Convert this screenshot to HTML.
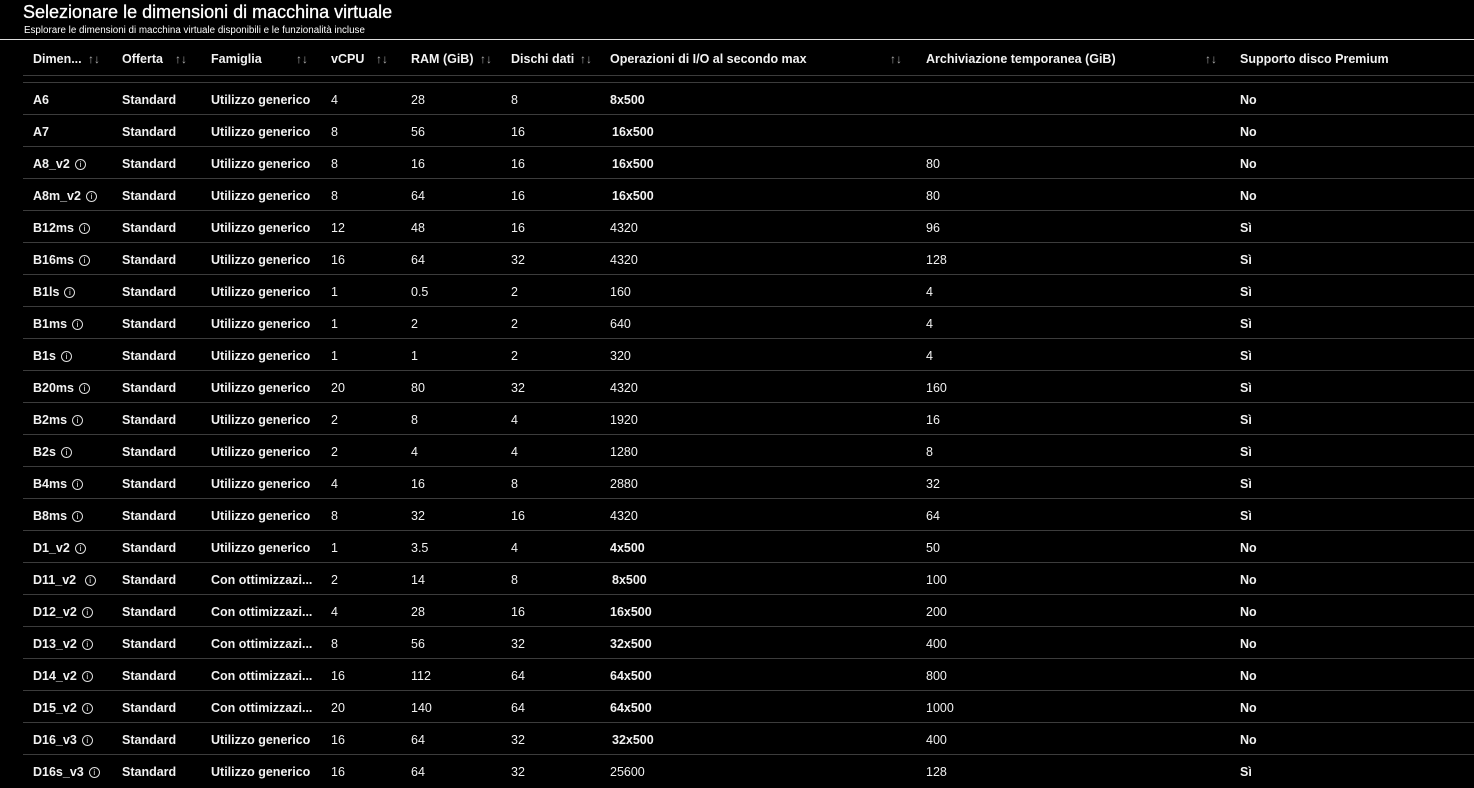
<!DOCTYPE html>
<html><head><meta charset="utf-8"><style>
*{margin:0;padding:0;box-sizing:border-box}
body{width:1474px;height:784px;background:#000;color:#f2f2f2;font-family:"Liberation Sans",sans-serif;overflow:hidden;position:relative}
.t{position:absolute;left:23px;top:2px;font-size:18px;color:#fff;white-space:nowrap;-webkit-text-stroke:0.3px #fff}
.s{position:absolute;left:24px;top:25px;font-size:9.8px;color:#fff;white-space:nowrap}
.hl{position:absolute;left:0;top:39px;width:1474px;height:1px;background:#ddd}
.r{position:absolute;left:0;width:1474px;height:32px;font-size:12.5px}
.r span{position:absolute;top:50%;transform:translateY(-50%);white-space:nowrap}
.ln{position:absolute;left:23px;width:1451px;height:1px;background:#3c3c3c}
.h span{font-weight:bold;font-size:12.5px}
.ar{color:#aaa;font-weight:normal!important;font-size:12px!important}
.i{display:inline-block;width:11px;height:11px;border:1px solid #ddd;border-radius:50%;font-size:8px;line-height:9px;text-align:center;vertical-align:1px;margin-left:5px;font-weight:normal;font-style:normal}
.b{font-weight:bold}
</style></head><body>
<div class="t">Selezionare le dimensioni di macchina virtuale</div>
<div class="s">Esplorare le dimensioni di macchina virtuale disponibili e le funzionalità incluse</div>
<div class="hl"></div>
<div class="r h" style="top:43px">
<span style="left:33px">Dimen...</span><span class="ar" style="left:88px">↑↓</span>
<span style="left:122px">Offerta</span><span class="ar" style="left:175px">↑↓</span>
<span style="left:211px">Famiglia</span><span class="ar" style="left:296px">↑↓</span>
<span style="left:331px">vCPU</span><span class="ar" style="left:376px">↑↓</span>
<span style="left:411px">RAM (GiB)</span><span class="ar" style="left:480px">↑↓</span>
<span style="left:511px">Dischi dati</span><span class="ar" style="left:580px">↑↓</span>
<span style="left:610px">Operazioni di I/O al secondo max</span><span class="ar" style="left:890px">↑↓</span>
<span style="left:926px">Archiviazione temporanea (GiB)</span><span class="ar" style="left:1205px">↑↓</span>
<span style="left:1240px">Supporto disco Premium</span>
</div>
<div class="ln" style="top:75px"></div>
<div class="ln" style="top:82px"></div>

<div class="r" style="top:84px"><span class="b" style="left:33px">A6</span><span class="b" style="left:122px">Standard</span><span class="b" style="left:211px">Utilizzo generico</span><span style="left:331px">4</span><span style="left:411px">28</span><span style="left:511px">8</span><span class="b" style="left:610px">8x500</span><span style="left:926px"></span><span class="b" style="left:1240px">No</span></div>
<div class="ln" style="top:114px"></div>
<div class="r" style="top:116px"><span class="b" style="left:33px">A7</span><span class="b" style="left:122px">Standard</span><span class="b" style="left:211px">Utilizzo generico</span><span style="left:331px">8</span><span style="left:411px">56</span><span style="left:511px">16</span><span class="b" style="left:612px">16x500</span><span style="left:926px"></span><span class="b" style="left:1240px">No</span></div>
<div class="ln" style="top:146px"></div>
<div class="r" style="top:148px"><span class="b" style="left:33px">A8_v2<i class="i">i</i></span><span class="b" style="left:122px">Standard</span><span class="b" style="left:211px">Utilizzo generico</span><span style="left:331px">8</span><span style="left:411px">16</span><span style="left:511px">16</span><span class="b" style="left:612px">16x500</span><span style="left:926px">80</span><span class="b" style="left:1240px">No</span></div>
<div class="ln" style="top:178px"></div>
<div class="r" style="top:180px"><span class="b" style="left:33px">A8m_v2<i class="i">i</i></span><span class="b" style="left:122px">Standard</span><span class="b" style="left:211px">Utilizzo generico</span><span style="left:331px">8</span><span style="left:411px">64</span><span style="left:511px">16</span><span class="b" style="left:612px">16x500</span><span style="left:926px">80</span><span class="b" style="left:1240px">No</span></div>
<div class="ln" style="top:210px"></div>
<div class="r" style="top:212px"><span class="b" style="left:33px">B12ms<i class="i">i</i></span><span class="b" style="left:122px">Standard</span><span class="b" style="left:211px">Utilizzo generico</span><span style="left:331px">12</span><span style="left:411px">48</span><span style="left:511px">16</span><span style="left:610px">4320</span><span style="left:926px">96</span><span class="b" style="left:1240px">Sì</span></div>
<div class="ln" style="top:242px"></div>
<div class="r" style="top:244px"><span class="b" style="left:33px">B16ms<i class="i">i</i></span><span class="b" style="left:122px">Standard</span><span class="b" style="left:211px">Utilizzo generico</span><span style="left:331px">16</span><span style="left:411px">64</span><span style="left:511px">32</span><span style="left:610px">4320</span><span style="left:926px">128</span><span class="b" style="left:1240px">Sì</span></div>
<div class="ln" style="top:274px"></div>
<div class="r" style="top:276px"><span class="b" style="left:33px">B1ls<i class="i">i</i></span><span class="b" style="left:122px">Standard</span><span class="b" style="left:211px">Utilizzo generico</span><span style="left:331px">1</span><span style="left:411px">0.5</span><span style="left:511px">2</span><span style="left:610px">160</span><span style="left:926px">4</span><span class="b" style="left:1240px">Sì</span></div>
<div class="ln" style="top:306px"></div>
<div class="r" style="top:308px"><span class="b" style="left:33px">B1ms<i class="i">i</i></span><span class="b" style="left:122px">Standard</span><span class="b" style="left:211px">Utilizzo generico</span><span style="left:331px">1</span><span style="left:411px">2</span><span style="left:511px">2</span><span style="left:610px">640</span><span style="left:926px">4</span><span class="b" style="left:1240px">Sì</span></div>
<div class="ln" style="top:338px"></div>
<div class="r" style="top:340px"><span class="b" style="left:33px">B1s<i class="i">i</i></span><span class="b" style="left:122px">Standard</span><span class="b" style="left:211px">Utilizzo generico</span><span style="left:331px">1</span><span style="left:411px">1</span><span style="left:511px">2</span><span style="left:610px">320</span><span style="left:926px">4</span><span class="b" style="left:1240px">Sì</span></div>
<div class="ln" style="top:370px"></div>
<div class="r" style="top:372px"><span class="b" style="left:33px">B20ms<i class="i">i</i></span><span class="b" style="left:122px">Standard</span><span class="b" style="left:211px">Utilizzo generico</span><span style="left:331px">20</span><span style="left:411px">80</span><span style="left:511px">32</span><span style="left:610px">4320</span><span style="left:926px">160</span><span class="b" style="left:1240px">Sì</span></div>
<div class="ln" style="top:402px"></div>
<div class="r" style="top:404px"><span class="b" style="left:33px">B2ms<i class="i">i</i></span><span class="b" style="left:122px">Standard</span><span class="b" style="left:211px">Utilizzo generico</span><span style="left:331px">2</span><span style="left:411px">8</span><span style="left:511px">4</span><span style="left:610px">1920</span><span style="left:926px">16</span><span class="b" style="left:1240px">Sì</span></div>
<div class="ln" style="top:434px"></div>
<div class="r" style="top:436px"><span class="b" style="left:33px">B2s<i class="i">i</i></span><span class="b" style="left:122px">Standard</span><span class="b" style="left:211px">Utilizzo generico</span><span style="left:331px">2</span><span style="left:411px">4</span><span style="left:511px">4</span><span style="left:610px">1280</span><span style="left:926px">8</span><span class="b" style="left:1240px">Sì</span></div>
<div class="ln" style="top:466px"></div>
<div class="r" style="top:468px"><span class="b" style="left:33px">B4ms<i class="i">i</i></span><span class="b" style="left:122px">Standard</span><span class="b" style="left:211px">Utilizzo generico</span><span style="left:331px">4</span><span style="left:411px">16</span><span style="left:511px">8</span><span style="left:610px">2880</span><span style="left:926px">32</span><span class="b" style="left:1240px">Sì</span></div>
<div class="ln" style="top:498px"></div>
<div class="r" style="top:500px"><span class="b" style="left:33px">B8ms<i class="i">i</i></span><span class="b" style="left:122px">Standard</span><span class="b" style="left:211px">Utilizzo generico</span><span style="left:331px">8</span><span style="left:411px">32</span><span style="left:511px">16</span><span style="left:610px">4320</span><span style="left:926px">64</span><span class="b" style="left:1240px">Sì</span></div>
<div class="ln" style="top:530px"></div>
<div class="r" style="top:532px"><span class="b" style="left:33px">D1_v2<i class="i">i</i></span><span class="b" style="left:122px">Standard</span><span class="b" style="left:211px">Utilizzo generico</span><span style="left:331px">1</span><span style="left:411px">3.5</span><span style="left:511px">4</span><span class="b" style="left:610px">4x500</span><span style="left:926px">50</span><span class="b" style="left:1240px">No</span></div>
<div class="ln" style="top:562px"></div>
<div class="r" style="top:564px"><span class="b" style="left:33px">D11_v2 <i class="i">i</i></span><span class="b" style="left:122px">Standard</span><span class="b" style="left:211px">Con ottimizzazi...</span><span style="left:331px">2</span><span style="left:411px">14</span><span style="left:511px">8</span><span class="b" style="left:612px">8x500</span><span style="left:926px">100</span><span class="b" style="left:1240px">No</span></div>
<div class="ln" style="top:594px"></div>
<div class="r" style="top:596px"><span class="b" style="left:33px">D12_v2<i class="i">i</i></span><span class="b" style="left:122px">Standard</span><span class="b" style="left:211px">Con ottimizzazi...</span><span style="left:331px">4</span><span style="left:411px">28</span><span style="left:511px">16</span><span class="b" style="left:610px">16x500</span><span style="left:926px">200</span><span class="b" style="left:1240px">No</span></div>
<div class="ln" style="top:626px"></div>
<div class="r" style="top:628px"><span class="b" style="left:33px">D13_v2<i class="i">i</i></span><span class="b" style="left:122px">Standard</span><span class="b" style="left:211px">Con ottimizzazi...</span><span style="left:331px">8</span><span style="left:411px">56</span><span style="left:511px">32</span><span class="b" style="left:610px">32x500</span><span style="left:926px">400</span><span class="b" style="left:1240px">No</span></div>
<div class="ln" style="top:658px"></div>
<div class="r" style="top:660px"><span class="b" style="left:33px">D14_v2<i class="i">i</i></span><span class="b" style="left:122px">Standard</span><span class="b" style="left:211px">Con ottimizzazi...</span><span style="left:331px">16</span><span style="left:411px">112</span><span style="left:511px">64</span><span class="b" style="left:610px">64x500</span><span style="left:926px">800</span><span class="b" style="left:1240px">No</span></div>
<div class="ln" style="top:690px"></div>
<div class="r" style="top:692px"><span class="b" style="left:33px">D15_v2<i class="i">i</i></span><span class="b" style="left:122px">Standard</span><span class="b" style="left:211px">Con ottimizzazi...</span><span style="left:331px">20</span><span style="left:411px">140</span><span style="left:511px">64</span><span class="b" style="left:610px">64x500</span><span style="left:926px">1000</span><span class="b" style="left:1240px">No</span></div>
<div class="ln" style="top:722px"></div>
<div class="r" style="top:724px"><span class="b" style="left:33px">D16_v3<i class="i">i</i></span><span class="b" style="left:122px">Standard</span><span class="b" style="left:211px">Utilizzo generico</span><span style="left:331px">16</span><span style="left:411px">64</span><span style="left:511px">32</span><span class="b" style="left:612px">32x500</span><span style="left:926px">400</span><span class="b" style="left:1240px">No</span></div>
<div class="ln" style="top:754px"></div>
<div class="r" style="top:756px"><span class="b" style="left:33px">D16s_v3<i class="i">i</i></span><span class="b" style="left:122px">Standard</span><span class="b" style="left:211px">Utilizzo generico</span><span style="left:331px">16</span><span style="left:411px">64</span><span style="left:511px">32</span><span style="left:610px">25600</span><span style="left:926px">128</span><span class="b" style="left:1240px">Sì</span></div>
</body></html>
